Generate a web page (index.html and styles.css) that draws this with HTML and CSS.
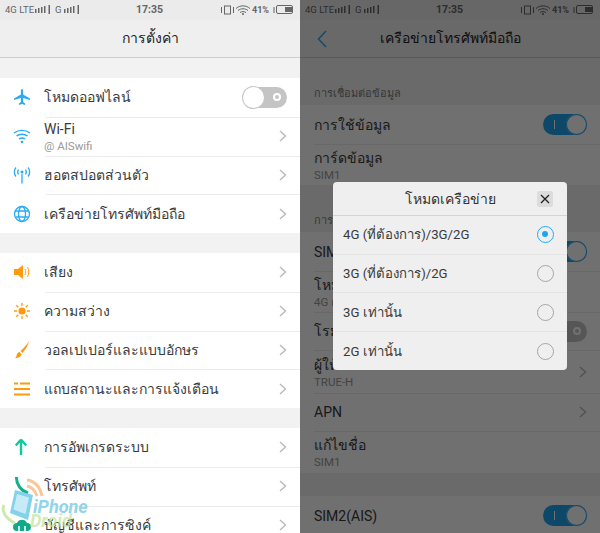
FILE: index.html
```html
<!DOCTYPE html>
<html lang="th">
<head>
  <meta charset="UTF-8" />
  <title>การตั้งค่า</title>
  <meta name="viewport" content="width=device-width, initial-scale=1.0" />
  <link rel="stylesheet" href="styles.css">
</head>
<body>
  <svg class="defs" width="0" height="0">
    <symbol id="chev" viewBox="0 0 8 12"><path d="M1 1l5.500 5L1 11" fill="none" stroke="#b9b9b9" stroke-width="1.400"/></symbol>
    <symbol id="status" viewBox="0 0 300 20">
      <g fill="currentColor">
        <rect x="35" y="9" width="1.500" height="4"/><rect x="38" y="8" width="1.500" height="5"/><rect x="41" y="7" width="1.500" height="6"/><rect x="44" y="6" width="1.500" height="7"/><rect x="48.500" y="5" width="1.500" height="9"/>
        <rect x="64" y="9" width="1.500" height="4"/><rect x="67" y="8" width="1.500" height="5"/><rect x="70" y="7" width="1.500" height="6"/><rect x="73" y="6" width="1.500" height="7"/><rect x="77.500" y="5" width="1.500" height="9"/>
      </g>
      <g fill="none" stroke="currentColor">
        <rect x="224.500" y="6" width="6" height="8"/><path d="M221.500 7v6M233.500 7v6"/>
        <path d="M236 8.500c4-3.500 10-3.500 14 0M238 10.500c3-2.300 7-2.300 10 0M240 12.500c2-1.200 4-1.200 6 0"/>
        <path d="M274 7v6"/><rect x="276.500" y="5.500" width="16" height="8" rx="1.500"/>
      </g>
      <circle cx="243" cy="14" r="1" fill="currentColor"/>
      <rect x="285" y="7" width="7" height="5" fill="currentColor"/>
    </symbol>
  </svg>

  <div class="phones">
    <!-- settings list -->
    <div class="screen">
      <div class="statusbar">
        <span class="st-left">4G LTE</span><span class="st-g">G</span>
        <span class="st-time">17:35</span><span class="st-batt">41%</span>
        <svg class="st-icons"><use href="#status"/></svg>
      </div>
      <header class="titlebar">การตั้งค่า</header>

      <section class="group">
        <div class="row">
          <svg class="ico" viewBox="0 0 18 18"><path d="M9 1c.8 0 1.100 1 1.100 2v3.500L17 10.500v1.500l-6.900-2v4l2 1.500V17L9 16l-3.100 1v-1.500l2-1.500v-4L1 12v-1.500l6.900-4V3C7.900 2 8.200 1 9 1z" fill="#29aaf5"/></svg>
          <span class="label">โหมดออฟไลน์</span>
          <span class="toggle off"><i></i></span>
        </div>
        <div class="row">
          <svg class="ico" viewBox="0 0 18 18"><g fill="none" stroke="#29aaf5" stroke-width="1.400"><path d="M1 6c4.500-3.500 11.500-3.500 16 0"/><path d="M3.500 9c3-2.300 8-2.300 11 0"/><path d="M6 12c1.800-1.200 4.200-1.200 6 0"/></g><circle cx="9" cy="15" r="1.300" fill="#29aaf5"/></svg>
          <div class="label">Wi-Fi<small>@ AISwifi</small></div>
          <svg class="chev"><use href="#chev"/></svg>
        </div>
        <div class="row">
          <svg class="ico" viewBox="0 0 18 18"><g fill="none" stroke="#29aaf5" stroke-width="1.300"><path d="M3 1.500c-2.200 2.500-2.200 6.500 0 9M15 1.500c2.200 2.500 2.200 6.500 0 9M5.500 3.500c-1 1.500-1 3.500 0 5M12.500 3.500c1 1.500 1 3.500 0 5"/><path d="M9 8v9.500"/></g><circle cx="9" cy="6" r="1.500" fill="#29aaf5"/></svg>
          <span class="label">ฮอตสปอตส่วนตัว</span>
          <svg class="chev"><use href="#chev"/></svg>
        </div>
        <div class="row">
          <svg class="ico" viewBox="0 0 18 18"><g fill="none" stroke="#29aaf5" stroke-width="1.300"><circle cx="9" cy="9" r="7.500"/><ellipse cx="9" cy="9" rx="3.500" ry="7.500"/><path d="M2.500 6h13M2.500 12h13"/></g></svg>
          <span class="label">เครือข่ายโทรศัพท์มือถือ</span>
          <svg class="chev"><use href="#chev"/></svg>
        </div>
      </section>

      <section class="group">
        <div class="row">
          <svg class="ico" viewBox="0 0 18 18"><path d="M1 6h4l5-4v14l-5-4H1z" fill="#ff9a0e"/><path d="M12 6c1 1.800 1 4.200 0 6M14.500 4c1.700 3 1.700 7 0 10" fill="none" stroke="#ff9a0e"/></svg>
          <span class="label">เสียง</span>
          <svg class="chev"><use href="#chev"/></svg>
        </div>
        <div class="row">
          <svg class="ico" viewBox="0 0 18 18"><circle cx="9" cy="9" r="3.600" fill="#ff9a0e"/><path d="M9 1v3M9 14v3M1 9h3M14 9h3M3.300 3.300l2 2M12.700 12.700l2 2M3.300 14.700l2-2M12.700 5.300l2-2" stroke="#ff9a0e" stroke-width="1.300"/></svg>
          <span class="label">ความสว่าง</span>
          <svg class="chev"><use href="#chev"/></svg>
        </div>
        <div class="row">
          <svg class="ico" viewBox="0 0 18 18"><path d="M16 0C13.500 4 10.500 7.500 7.500 10l2 2C12.500 8.500 15 4.500 16 0z" fill="#ff9a0e"/><path d="M6.500 11l2 2.200C8 15.500 5.500 17.500 2 17c1.500-1 1.500-2.500 2-4 .5-1 1.500-1.800 2.500-2z" fill="#ff9a0e"/></svg>
          <span class="label">วอลเปเปอร์และแบบอักษร</span>
          <svg class="chev"><use href="#chev"/></svg>
        </div>
        <div class="row">
          <svg class="ico" viewBox="0 0 18 18"><path d="M1 3.500h4M7 3.500h10M1 9h16M1 14.500h16" stroke="#ff9a0e" stroke-width="1.800" fill="none"/></svg>
          <span class="label">แถบสถานะและการแจ้งเตือน</span>
          <svg class="chev"><use href="#chev"/></svg>
        </div>
      </section>

      <section class="group">
        <div class="row">
          <svg class="ico" viewBox="0 0 18 18"><path d="M8 1.500L2.800 7.500M8 1.500l5.200 6M8 2v15" fill="none" stroke="#12c99b" stroke-width="2.400"/></svg>
          <span class="label">การอัพเกรดระบบ</span>
          <svg class="chev"><use href="#chev"/></svg>
        </div>
        <div class="row">
          <svg class="ico" viewBox="0 0 18 18"><path d="M3.500 0C3 7 8 14 15 16" fill="none" stroke="#12b08c" stroke-width="3"/></svg>
          <span class="label">โทรศัพท์</span>
          <svg class="chev"><use href="#chev"/></svg>
        </div>
        <div class="row">
          <svg class="ico" viewBox="0 0 18 18"><path d="M4 15a4 4 0 0 1 0-8 5.500 5.500 0 0 1 10 0 4 4 0 0 1 0 8z" fill="#12a98a"/><path d="M6 15V10M12 15V10" stroke="#fff" stroke-width="1.500"/></svg>
          <span class="label">บัญชีและการซิงค์</span>
          <svg class="chev"><use href="#chev"/></svg>
        </div>
      </section>

      <div class="watermark">
        <svg class="wm-art" viewBox="0 0 60 57">
          <path d="M4 29c-3 6 2 14 11 18" fill="none" stroke="#cfe8ae" stroke-width="3"/>
          <path d="M27 4c8 1 13 7 15 16M27 10c5 1 8 4 10 10" fill="none" stroke="#f9c79a" stroke-width="3"/>
          <path d="M15 14l18 5-5 25-18-7z" fill="#84d2ea"/>
          <path d="M17 18l12 3.500-3.500 16.500-12-4.500z" fill="#c6ebf6"/>
        </svg>
        <span class="wm-b">Droid</span>
        <span class="wm-a">iPhone</span>
      </div>
    </div>

    <!-- network screen with dialog -->
    <div class="screen">
      <div class="statusbar">
        <span class="st-left">4G LTE</span><span class="st-g">G</span>
        <span class="st-time">17:35</span><span class="st-batt">41%</span>
        <svg class="st-icons"><use href="#status"/></svg>
      </div>
      <header class="titlebar">
        <svg class="back" viewBox="0 0 10 18"><path d="M9 1L1.500 9 9 17" fill="none" stroke="#29aaf5" stroke-width="1.500"/></svg>
        เครือข่ายโทรศัพท์มือถือ
      </header>

      <div class="caption">การเชื่อมต่อข้อมูล</div>
      <section class="plain">
        <div class="line">
          <span class="label">การใช้ข้อมูล</span>
          <span class="toggle on"><i></i></span>
        </div>
        <div class="line h41">
          <div class="label">การ์ดข้อมูล<small>SIM1</small></div>
        </div>
      </section>

      <div class="caption">การตั้งค่า SIM1</div>
      <section class="plain">
        <div class="line">
          <span class="label">SIM1</span>
          <span class="toggle on"><i></i></span>
        </div>
        <div class="line h41">
          <div class="label">โหมดเครือข่าย<small>4G (ที่ต้องการ)</small></div>
        </div>
        <div class="line h38">
          <span class="label">โรมมิ่งข้อมูล</span>
          <span class="toggle off"><i></i></span>
        </div>
        <div class="line h43">
          <div class="label">ผู้ให้บริการ<small>TRUE-H</small></div>
          <svg class="chev"><use href="#chev"/></svg>
        </div>
        <div class="line h38">
          <span class="label">APN</span>
          <svg class="chev"><use href="#chev"/></svg>
        </div>
        <div class="line h42">
          <div class="label">แก้ไขชื่อ<small>SIM1</small></div>
        </div>
      </section>

      <section class="plain last">
        <div class="line">
          <span class="label">SIM2(AIS)</span>
          <span class="toggle on"><i></i></span>
        </div>
      </section>

      <div class="scrim"></div>

      <div class="dialog">
        <div class="dialog-head">
          โหมดเครือข่าย
          <span class="close"><svg width="10" height="10" viewBox="0 0 10 10"><path d="M1 1l8 8M9 1l-8 8" stroke="#222" stroke-width="1.300"/></svg></span>
        </div>
        <div class="opt">4G (ที่ต้องการ)/3G/2G<span class="radio sel"></span></div>
        <div class="opt">3G (ที่ต้องการ)/2G<span class="radio"></span></div>
        <div class="opt">3G เท่านั้น<span class="radio"></span></div>
        <div class="opt">2G เท่านั้น<span class="radio"></span></div>
      </div>
    </div>
  </div>
</body>
</html>
```

FILE: styles.css
```css
*,*::before,*::after{box-sizing:border-box;margin:0;padding:0}
body{font-family:Roboto,"Noto Sans",sans-serif;background:#f2f2f2;color:#3a3a3a}
.defs{position:absolute}
.phones{display:flex;width:600px;height:533px;overflow:hidden}
.screen{position:relative;width:300px;height:533px;overflow:hidden;background:#f2f2f2}
/* status + title */
.statusbar{position:relative;height:20px;background:#ebebeb;font-size:9.500px;line-height:20px;color:#666;font-family:Roboto,sans-serif}
.st-left{position:absolute;left:5px}
.st-g{position:absolute;left:55px}
.st-time{position:absolute;left:136px;font-size:10.500px;font-weight:700}
.st-batt{position:absolute;left:252px;font-size:9px;font-weight:700}
.st-icons{position:absolute;left:0;top:0;width:300px;height:20px}
.titlebar{position:relative;height:38px;background:#efefef;border-bottom:1px solid #cdcdcd;font-size:14px;line-height:36px;text-align:center;color:#222}
.back{position:absolute;left:17px;top:10px;width:10px;height:18px}
/* left list */
.group{margin-top:20px;background:#fff}
.row{display:flex;align-items:center;height:38.750px;padding-right:13px;position:relative}
.row+.row::before,.line+.line::before{content:"";position:absolute;left:46px;right:0;top:0;border-top:1px solid #ececec}
.ico{width:18px;height:18px;margin:0 13px;flex:none}
.label{flex:1;font-size:14px;line-height:18px;color:#3a3a3a}
.label small{display:block;margin-top:2px;font-size:11.500px;line-height:12px;color:#999}
.chev{width:8px;height:12px;flex:none}
/* switches */
.toggle{position:relative;display:block;width:44px;height:21px;border-radius:11px;flex:none}
.toggle i{position:absolute;top:0;width:21px;height:21px;border-radius:50%;background:#fff}
.toggle.off{background:#c4c4c4}
.toggle.off i{left:0;box-shadow:0 0 0 1px #c4c4c4}
.toggle.off::after{content:"";position:absolute;right:6px;top:6.500px;width:8px;height:8px;border:2px solid #fff;border-radius:50%}
.toggle.on{background:#1ea5f0}
.toggle.on i{right:0;box-shadow:inset 0 0 0 1px #1ea5f0}
.toggle.on::after{content:"";position:absolute;left:11px;top:6px;height:9px;border-left:1px solid #fff}
/* right list */
.caption{height:47px;padding:29px 0 0 14px;font-size:11px;line-height:14px;color:#7c7c7c}
.plain{background:#fff}
.plain.last{margin-top:23px}
.line{display:flex;align-items:center;position:relative;height:39px;padding:0 13px 0 14px}
.line+.line::before{left:14px}
.line.h38{height:38px}
.line.h41{height:41px}
.line.h42{height:42px}
.line.h43{height:43px}
/* dim layer and dialog */
.scrim{position:absolute;left:0;top:0;right:0;bottom:0;background:rgba(0,0,0,.56)}
.dialog{position:absolute;left:33px;top:182px;width:234px;height:188px;background:#efefef;border-radius:4px}
.dialog-head{position:relative;height:34px;font-size:14px;line-height:34px;text-align:center;color:#333;border-bottom:1px solid #d4d4d4}
.close{position:absolute;right:14px;top:9px;width:16px;height:16px;background:#dcdcdc;border-radius:2px;display:flex;align-items:center;justify-content:center}
.opt{position:relative;display:flex;align-items:center;justify-content:space-between;height:38.700px;padding:0 13px 0 10px;font-size:13.200px;color:#3a3a3a;border-bottom:1px solid #e4e4e4}
.opt:last-child{border-bottom:none}
.radio{position:relative;width:17px;height:17px;border:1px solid #a6a6a6;border-radius:50%;flex:none}
.radio.sel{border:1.500px solid #29aaf5}
.radio.sel::after{content:"";position:absolute;left:4px;top:4px;width:6px;height:6px;border-radius:50%;background:#1ea5f0}
/* watermark */
.watermark{position:absolute;left:0;top:476px;width:92px;height:57px;pointer-events:none}
.wm-art{position:absolute;left:0;top:0;width:60px;height:57px}
.wm-a{position:absolute;left:33px;top:21px;font:italic 700 18px/20px Roboto,sans-serif;color:#8fd5ec}
.wm-b{position:absolute;left:30px;top:35px;font:italic 700 18px/20px Roboto,sans-serif;color:rgba(190,225,150,.7)}
```
